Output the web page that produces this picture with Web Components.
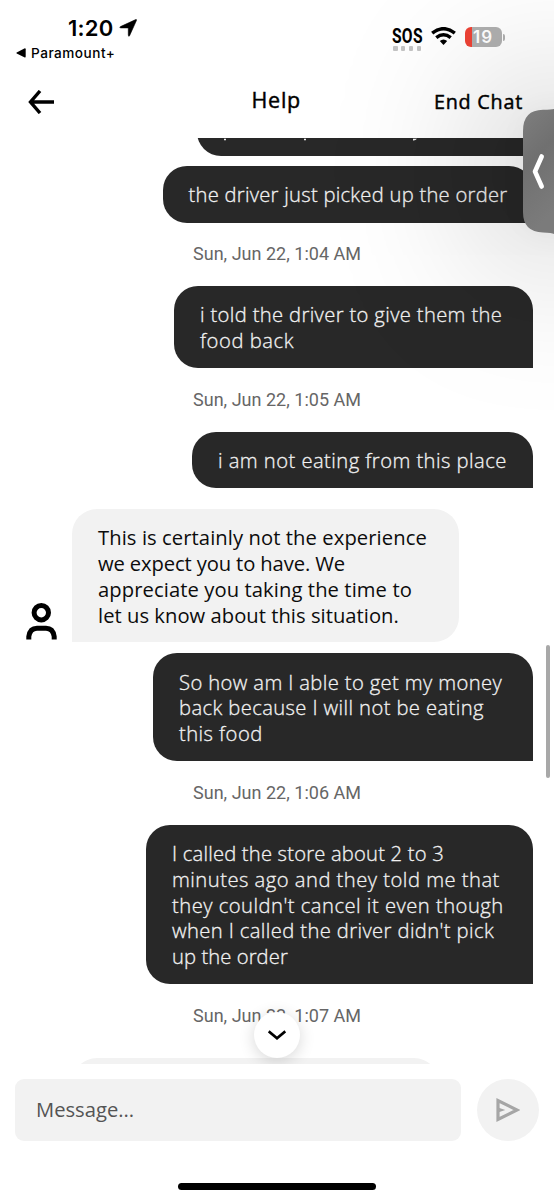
<!DOCTYPE html>
<html lang="en">
<head>
<meta charset="utf-8">
<title>Help</title>
<style>
html,body{margin:0;height:100%;background:#fff;overflow:hidden}
body{font-family:"Open Sans","Noto Sans","Liberation Sans",sans-serif}
</style>
</head>
<body>
<help-screen></help-screen>
<script>
const define=(name,html,init)=>customElements.define(name,class extends HTMLElement{
  constructor(){
    super();
    const t=document.createElement('template');
    t.innerHTML=html;
    this.attachShadow({mode:'open'}).append(t.content.cloneNode(true));
  }
  connectedCallback(){ if(init) init.call(this,this.shadowRoot); }
});

/* One line of text, tracked so that it spans the width in its "w" attribute. */
define('text-line',`<style>:host{display:block;white-space:pre}span{display:inline-block}</style><span><slot></slot></span>`,
function(root){
  const s=root.querySelector('span');
  const w=+this.getAttribute('w');
  const n=this.textContent.length;
  const natural=s.offsetWidth;
  if(w&&natural) s.style.letterSpacing=((w-natural)/n).toFixed(4)+'px';
});

define('status-bar',`<style>
:host{display:flex;justify-content:space-between;height:70px;box-sizing:border-box;padding:15px 49px 0 16px;font-family:Inter,sans-serif;color:#000}
.time{display:flex;align-items:center;height:26px;padding-left:52px;font-size:22px;font-weight:600;gap:5px}
.back{display:flex;align-items:center;height:24px;gap:5px;font-size:13.6px;font-weight:500}
.right{display:flex;height:40px;padding-top:11px}
.sos{width:31px;display:flex;flex-direction:column}
.sos b{font:700 20px/20px Roboto,sans-serif;transform:scaleX(.78);transform-origin:0 0;height:20px}
.dots{display:flex;gap:3.3px;padding:0 0 0 1px}
.dots i{width:4.6px;height:4.6px;border-radius:1px;background:#c4c4c4}
.wifi{margin:1px 9px 0 8px}
.bat{display:flex;align-items:center;height:20px;margin-top:1px}
.cell{width:37px;height:20px;border-radius:6px;box-sizing:border-box;padding-left:8px;background:linear-gradient(90deg,#ee4336 7px,#b0b0b0 7px);color:#fff;font:600 17px/20px Inter,sans-serif}
.nub{width:2px;height:7px;margin-left:1px;border-radius:0 2px 2px 0;background:#b0b0b0}
</style>
<div><div class="time"><text-line w="46">1:20</text-line><svg width="18" height="18" viewBox="0 0 18 18"><path d="M16.7 0.6Q18 .2 17.4 1.6L10.7 16.4Q9.7 18.3 9.3 16.2V8.9H1.8Q-.1 8.6 1.5 7.6Z" stroke="#000" stroke-width=".6"/></svg></div>
<div class="back"><svg width="10" height="10" viewBox="0 0 10 10"><path d="M0.7 4.4 8.3.5Q9.7 0 9.7 1.3V8.6Q9.7 9.9 8.3 9.3L.7 5.5Q0 5 .7 4.4Z"/></svg><text-line w="84">Paramount+</text-line></div></div>
<div class="right"><div class="sos"><b><text-line w="39">SOS</text-line></b><div class="dots"><i></i><i></i><i></i><i></i></div></div>
<svg class="wifi" width="25" height="18" viewBox="0 0 25 18"><g fill="none" stroke="#000" stroke-width="3.5"><path d="M1.2 6.2Q12.5-2.8 23.8 6.2"/><path d="M5.3 10.6Q12.5 4.8 19.7 10.6"/></g><path d="M8.8 14.1Q12.5 11 16.2 14.1L12.5 18Z"/></svg>
<div class="bat"><div class="cell"><text-line w="20">19</text-line></div><div class="nub"></div></div></div>`);

define('nav-bar',`<style>
:host{display:grid;grid-template-columns:1fr 48px 1fr;align-items:center;height:68px;padding:0 31px 0 28px;color:#000;-webkit-text-stroke:.45px #000}
svg{display:block}
.h{font-size:21.5px;padding-bottom:9px}
.e{justify-self:end;font-size:19.8px;padding-bottom:6px}
</style>
<svg width="27" height="24" viewBox="0 0 27 24" style="margin-bottom:5px"><path d="M2.2 12H26M12 1 2.5 12 12 23" fill="none" stroke="#000" stroke-width="3.4"/></svg>
<div class="h"><text-line w="50">Help</text-line></div><div class="e"><text-line w="89">End Chat</text-line></div>`);

define('user-message',`<style>
:host{display:block;box-sizing:border-box;align-self:flex-end;margin-right:21px;width:var(--w);background:#282828;color:#f2f2f2;border-radius:24px 24px 0 24px;padding:16.3px 0 14.5px 26px;font-size:20.2px;line-height:25.7px;font-weight:300;-webkit-text-stroke:.3px #f2f2f2}
</style><slot></slot>`);

define('agent-message',`<style>
:host{display:flex;align-items:flex-end;padding-left:26px}
.icon{width:46px;height:39px}
.b{box-sizing:border-box;width:var(--w);background:#f2f2f2;color:#0c0c0c;border-radius:25px 25px 25px 0;padding:16.6px 0 14.1px 26px;font-size:20.2px;line-height:25.7px}
</style><div class="icon"><svg width="31" height="37" viewBox="0 0 31 37"><circle cx="15.3" cy="9.7" r="7.2" fill="none" stroke="#000" stroke-width="5"/><path d="M2.8 36.5V33.5Q4 25.2 11 25.2H20Q27 25.2 28.2 33.5V36.5" fill="none" stroke="#000" stroke-width="5"/></svg></div><div class="b"><slot></slot></div>`);

define('time-stamp',`<style>
:host{display:flex;justify-content:center;align-items:center;height:63.5px;flex:none;font-family:Roboto,sans-serif;font-size:18px;line-height:24px;font-weight:400;color:#666}
</style><text-line w="168"><slot></slot></text-line>`,
function(root){
  const line=root.querySelector('text-line'), s=line.shadowRoot.querySelector('span');
  s.style.letterSpacing='0';
  s.style.letterSpacing=((168-s.getBoundingClientRect().width)/this.textContent.length)+'px';
});

define('chat-log',`<style>
:host{display:flex;flex-direction:column;height:926px;overflow:hidden;position:relative}
::slotted(*){flex:none}
.bar{position:absolute;right:4px;top:507px;width:4px;height:133px;border-radius:2px;background:#a8a8a8}
.down{position:absolute;left:254px;top:874px;width:46px;height:46px;border-radius:50%;background:#fff;box-shadow:0 3px 16px rgba(0,0,0,.16);display:grid;place-items:center}
</style><slot></slot><div class="bar"></div><div class="down"><svg width="18" height="11" viewBox="0 0 18 11"><path d="M.7 1.3 9 8.2 17.3 1.3" fill="none" stroke="#000" stroke-width="2.7"/></svg></div>`);

define('cut-message',`<style>
:host{display:block;align-self:flex-end;width:336px;height:17.5px;margin:0 21px 10.7px 0;overflow:hidden}
.b{height:50px;margin-top:-32.5px;background:#282828;border-radius:24px 24px 0 24px}
svg{display:block;padding-top:32.7px}
</style><div class="b"><svg width="335" height="4"><path d="M27 0h2v1.6h-2zM107 0h2v1.6h-2zM216 0h4Q218.5 2 216 1.7z" fill="#f2f2f2"/></svg></div>`);

define('message-composer',`<style>
:host{display:flex;justify-content:space-between;padding:14.7px 15px 0;height:105px;box-sizing:border-box}
.in{width:446px;height:62px;border-radius:9px;background:#f2f2f2;box-sizing:border-box;padding-left:21px;font-size:20.2px;line-height:61px;color:#545454}
.send{width:62px;height:62px;border-radius:50%;background:#f2f2f2;display:grid;place-items:center}
</style><div class="in"><text-line w="98">Message...</text-line></div><div class="send"><svg width="24" height="24" viewBox="0 0 24 24"><path d="M2 2.6V21.4L21 12Z" fill="none" stroke="#a6a6a6" stroke-width="3.2"/><path d="M2 9.5 9.3 12 2 14.5Z" fill="#a6a6a6"/></svg></div>`);

define('home-indicator',`<style>:host{display:block;width:198px;height:6.5px;margin:14px auto 0;border-radius:4px;background:#000}</style>`);

/* System picture-in-picture tab stashed at the screen's right edge. */
define('edge-tab',`<style>
:host{position:absolute;right:0;top:109px;width:31px;height:125px}
.shade{position:absolute;left:1px;top:2px;width:60px;height:121px;border-radius:20px;background:#787878;box-shadow:0 0 160px 30px rgba(0,0,0,.25),0 0 30px rgba(0,0,0,.04)}
svg{position:relative;display:block}
</style><div class="shade"></div><svg width="31" height="125" viewBox="0 0 31 125"><defs><linearGradient id="g" x2=".25" y2="1"><stop stop-color="#7e7e7e"/><stop offset=".45" stop-color="#707070"/><stop offset="1" stop-color="#7b7b7b"/></linearGradient></defs><path d="M31 0Q29 .8 20 .8Q0 1 0 22V103Q0 123 20 123.5Q29 123.6 31 125Z" fill="url(#g)"/><path d="M18.7 47.5 12 62.5 18.7 77.5" fill="none" stroke="#fff" stroke-width="4.6" stroke-linecap="round" stroke-linejoin="round"/></svg>`);

define('help-screen',`<style>
:host{display:block;position:relative;width:554px;height:1200px;overflow:hidden;background:#fff}
</style>
<status-bar></status-bar><nav-bar></nav-bar>
<chat-log>
<cut-message></cut-message>
<user-message style="--w:370.5px"><text-line w="319">the driver just picked up the order</text-line></user-message>
<time-stamp>Sun, Jun 22, 1:04 AM</time-stamp>
<user-message style="--w:359px"><text-line w="302">i told the driver to give them the</text-line><text-line w="94">food back</text-line></user-message>
<time-stamp>Sun, Jun 22, 1:05 AM</time-stamp>
<user-message style="--w:341px"><text-line w="289">i am not eating from this place</text-line></user-message>
<agent-message style="--w:387px;margin:20.5px 0 11px"><text-line w="329">This is certainly not the experience</text-line><text-line w="247">we expect you to have. We</text-line><text-line w="314">appreciate you taking the time to</text-line><text-line w="301">let us know about this situation.</text-line></agent-message>
<user-message style="--w:380px"><text-line w="323">So how am I able to get my money</text-line><text-line w="305">back because I will not be eating</text-line><text-line w="84">this food</text-line></user-message>
<time-stamp>Sun, Jun 22, 1:06 AM</time-stamp>
<user-message style="--w:387px"><text-line w="272">I called the store about 2 to 3</text-line><text-line w="328">minutes ago and they told me that</text-line><text-line w="332">they couldn't cancel it even though</text-line><text-line w="322">when I called the driver didn't pick</text-line><text-line w="116">up the order</text-line></user-message>
<time-stamp>Sun, Jun 22, 1:07 AM</time-stamp>
<div style="margin:10.2px 0 0 72px;width:367px;height:50px;background:#f2f2f2;border-radius:25px 25px 0 0"></div>
</chat-log>
<message-composer></message-composer><home-indicator></home-indicator>
<edge-tab></edge-tab>`);
</script>
</body>
</html>
